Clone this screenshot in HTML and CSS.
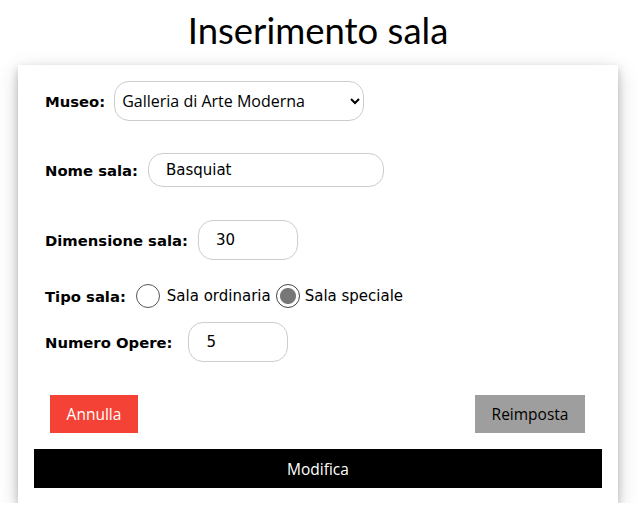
FILE: index.html
```html
<!DOCTYPE html>
<html lang="it">
<head>
<meta charset="utf-8">
<title>Inserimento sala</title>
<link rel="stylesheet" href="styles.css">
</head>
<body>
<div class="page">
  <h1 class="title">Inserimento sala</h1>
  <form class="card">
    <div class="row row-museo">
      <label class="lbl lbl-museo">Museo:</label>
      <select class="sel">
        <option>Galleria di Arte Moderna</option>
      </select>
    </div>
    <div class="row row-nome">
      <label class="lbl">Nome sala:</label>
      <input class="inp inp-nome" type="text" value="Basquiat">
    </div>
    <div class="row row-dim">
      <label class="lbl">Dimensione sala:</label>
      <input class="inp inp-small" type="text" value="30">
    </div>
    <div class="row row-tipo">
      <label class="lbl">Tipo sala:</label>
      <span class="radio"></span><span class="rtext">Sala ordinaria</span>
      <span class="radio checked"></span><span class="rtext">Sala speciale</span>
    </div>
    <div class="row row-num">
      <label class="lbl lbl-num">Numero Opere:</label>
      <input class="inp inp-small" type="text" value="5">
    </div>
    <div class="actions">
      <button type="button" class="btn btn-red">Annulla</button>
      <button type="button" class="btn btn-grey">Reimposta</button>
    </div>
    <button type="button" class="btn btn-black">Modifica</button>
  </form>
</div>
</body>
</html>
```
FILE: styles.css
```css
html, body {
  margin: 0;
  padding: 0;
  background: #fff;
}
.page {
  width: 600px;
  margin-left: 18px;
  padding-top: 7px;
}
.title {
  margin: 0 0 12px;
  text-align: center;
  font-family: "Lato", "Open Sans", sans-serif;
  font-weight: 400;
  font-size: 36.5px;
  line-height: 46px;
  color: #000;
}
.card {
  display: flex;
  flex-direction: column;
  padding: 16px 16px 15px;
  background: #fff;
  box-shadow: 0 4px 8px rgba(0,0,0,0.2), 0 6px 20px rgba(0,0,0,0.19);
}
.row {
  display: flex;
  align-items: center;
  padding-left: 11px;
  font-family: "DejaVu Sans", Verdana, sans-serif;
}
.lbl {
  font-weight: bold;
  font-size: 14.8px;
  color: #000;
  margin-right: 10px;
}
.lbl-museo { margin-right: 9px; }
.lbl-num { margin-right: 16px; }
.row-nome { margin-top: 32px; }
.row-dim { margin-top: 33px; }
.row-tipo { margin-top: 24px; height: 24px; }
.row-num { margin-top: 14px; }
.sel {
  width: 250px;
  height: 40px;
  border: 1px solid #ccc;
  border-radius: 15px;
  background: #fff;
  padding: 0 3px;
  font-family: "Open Sans", "Noto Sans", sans-serif;
  font-size: 16px;
  color: #000;
}
.inp {
  box-sizing: border-box;
  border: 1px solid #ccc;
  border-radius: 15px;
  background: #fff;
  padding: 0 0 0 17px;
  font-family: "DejaVu Sans", Verdana, sans-serif;
  font-size: 15px;
  color: #000;
  outline: none;
}
.inp-nome { width: 236px; height: 34px; }
.inp-small { width: 100px; height: 40px; }
.radio {
  box-sizing: border-box;
  width: 24px;
  height: 24px;
  border: 1px solid #555;
  border-radius: 50%;
  background: #fff;
  margin-right: 7px;
}
.radio.checked {
  border-color: #444;
  background: radial-gradient(circle, #777 0 7.5px, #fff 8.5px);
  margin-left: 5px;
  margin-right: 5px;
}
.rtext {
  font-size: 15px;
  color: #000;
}
.actions {
  display: flex;
  justify-content: space-between;
  margin-top: 33px;
  padding: 0 17px 0 16px;
}
.btn {
  border: none;
  border-radius: 0;
  height: 38px;
  font-family: "Open Sans", "Noto Sans", sans-serif;
  font-size: 15.5px;
  cursor: pointer;
}
.btn-red {
  width: 88px;
  background: #f44336;
  color: #fff;
}
.btn-grey {
  width: 110px;
  background: #9e9e9e;
  color: #000;
}
.btn-black {
  margin-top: 16px;
  width: 100%;
  height: 39px;
  background: #000;
  color: #fff;
}
```
